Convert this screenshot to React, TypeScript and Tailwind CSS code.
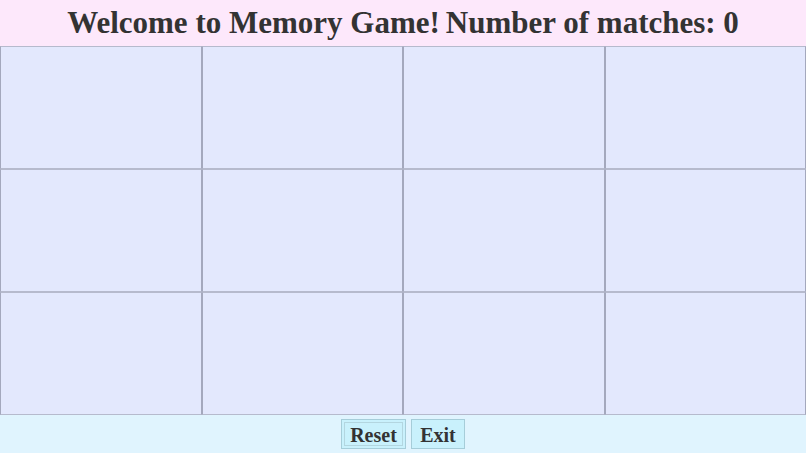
import React, { useState } from 'react';

const CARDS = Array.from({ length: 12 }, (_, i) => i);

function Card() {
  return (
    <div className="h-[123px] border border-x-[#a4a8bd] border-y-[#b6bacd] bg-[#e3e8fd]" />
  );
}

export default function App() {
  const [matches, setMatches] = useState(0);

  return (
    <div className="flex h-[453px] w-full flex-col font-['Liberation_Serif',serif] text-[#333333]">
      <header className="flex h-[46px] items-center justify-center gap-[6px] bg-[#fde8fb] text-[31px] font-bold">
        <span>Welcome to Memory Game!</span>
        <span>Number of matches: {matches}</span>
      </header>
      <main className="grid grid-cols-4">
        {CARDS.map((id) => (
          <Card key={id} />
        ))}
      </main>
      <footer className="flex flex-1 items-center justify-center gap-[5px] bg-[#e0f4fe]">
        <button
          onClick={() => setMatches(0)}
          className="h-[30px] w-[65px] border border-[#a6cdd9] bg-[#c9f1fc] text-[20px] font-bold text-[#333333] outline outline-1 -outline-offset-4 outline-[#b3d6e0]"
        >
          Reset
        </button>
        <button className="h-[30px] w-[54px] border border-[#a6cdd9] bg-[#c9f1fc] text-[20px] font-bold text-[#333333]">
          Exit
        </button>
      </footer>
    </div>
  );
}
